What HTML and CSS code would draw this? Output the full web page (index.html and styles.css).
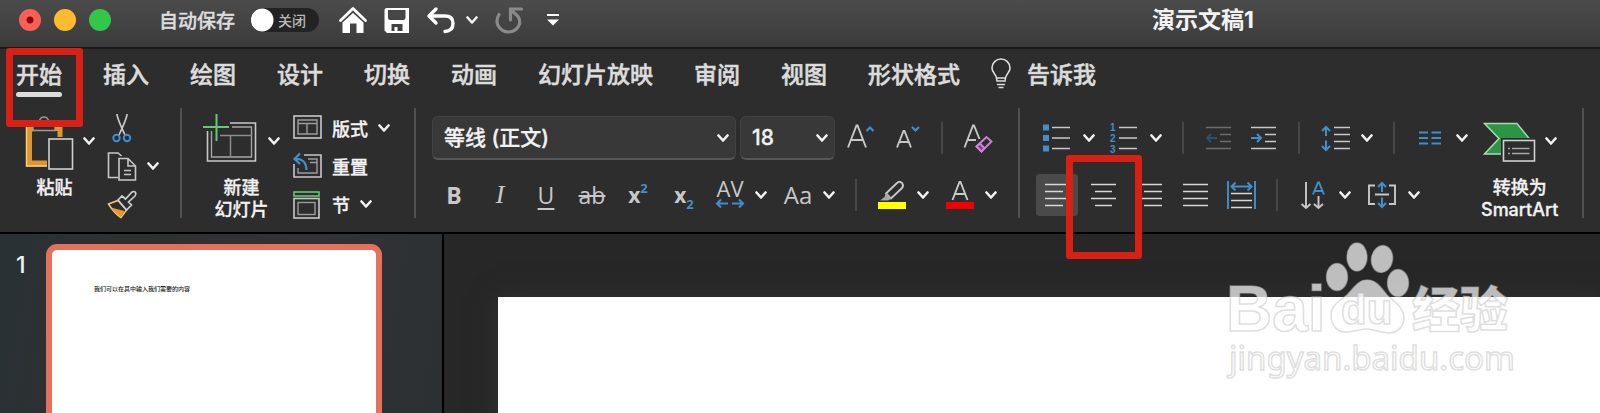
FILE: index.html
```html
<!DOCTYPE html>
<html lang="zh-CN">
<head>
  <meta charset="UTF-8" />
  <meta name="viewport" content="width=device-width, initial-scale=1.0" />
  <title>演示文稿1</title>
  <link rel="stylesheet" href="styles.css">
</head>
<body>
  <svg class="defs" width="0" height="0" aria-hidden="true">
    <symbol id="chev" viewBox="0 0 12 12">
      <path d="M1.5 3.5 L6 8.5 L10.5 3.5" fill="none" stroke="#f2f2f2" stroke-width="2.6" stroke-linecap="round" stroke-linejoin="round" />
    </symbol>
  </svg>

  <header class="titlebar">
    <div class="lights">
      <button class="light close" aria-label="关闭窗口"></button>
      <button class="light minimize" aria-label="最小化"></button>
      <button class="light zoom" aria-label="缩放"></button>
    </div>
    <label class="autosave">
      自动保存
      <span class="switch">
        <input type="checkbox">
        <span class="switch-text">关闭</span>
      </span>
    </label>
    <div class="quick">
      <button aria-label="主页">
        <svg width="28" height="28" viewBox="0 0 28 28">
          <path d="M1.5 14.5 L14 2.5 L26.5 14.5" fill="none" stroke="#fff" stroke-width="2.8" stroke-linecap="round" stroke-linejoin="round" />
          <path d="M3.5 16.5 L14 7 L24.5 16.5 V27 H17.5 V17.5 H11 V27 H3.5 Z" fill="#fff" />
        </svg>
      </button>
      <button aria-label="保存">
        <svg width="26" height="28" viewBox="0 0 26 28">
          <path fill-rule="evenodd" d="M2 2 H25 V27 H3 L0.5 24.5 V3.5 Z M4 4 V11.5 Q4 14 6.5 14 H19 Q21.5 14 21.5 11.5 V4 Z M7.5 18 H18.5 V25 H13.5 V21 H10.5 V25 H7.5 Z" fill="#fff" />
        </svg>
      </button>
      <div class="undo">
        <button aria-label="撤消">
          <svg width="28" height="28" viewBox="0 0 28 28">
            <path d="M9 3 L2 10 L9 17 M2.5 10 H18 Q26 10 26 17.5 Q26 25 18 25.5" fill="none" stroke="#fff" stroke-width="3.4" stroke-linecap="round" stroke-linejoin="round" />
          </svg>
        </button>
        <button aria-label="撤消选项"><svg width="12" height="12"><use href="#chev" /></svg></button>
      </div>
      <button aria-label="重复">
        <svg width="28" height="28" viewBox="0 0 28 28">
          <path d="M4 8.5 Q0.5 14 3 19.5 Q6.500 26 14 26 Q22 25.500 24.500 18 Q25.500 12 21 8.500 L16.500 4.500 M15.500 14 V3 H26.500" fill="none" stroke="#8a8a8a" stroke-width="3.2" stroke-linecap="round" />
        </svg>
      </button>
      <button class="customize" aria-label="自定义快速访问工具栏">
        <svg width="14" height="14" viewBox="0 0 14 14">
          <path d="M1 2 H13" stroke="#fff" stroke-width="2" />
          <path d="M1 6.5 H13 L7 12.500 Z" fill="#fff" />
        </svg>
      </button>
    </div>
    <h1 class="doc-title">演示文稿1</h1>
  </header>

  <nav class="tabs">
    <button class="tab active">开始<span class="mark mark-tab"></span></button>
    <button class="tab">插入</button>
    <button class="tab">绘图</button>
    <button class="tab">设计</button>
    <button class="tab">切换</button>
    <button class="tab">动画</button>
    <button class="tab">幻灯片放映</button>
    <button class="tab">审阅</button>
    <button class="tab">视图</button>
    <button class="tab">形状格式</button>
    <button class="tab tell-me">
      <svg width="20" height="32" viewBox="0 0 20 32" fill="none" stroke="#dcdcdc" stroke-width="1.6">
        <path d="M6 23 Q6 18.5 3 15 Q1 12.5 1 10 A9 9 0 0 1 19 10 Q19 12.5 17 15 Q14 18.5 14 23 Z M6 20 H14 M6 26.5 H14 M7.5 29.5 H12.5" />
      </svg>
      告诉我
    </button>
  </nav>

  <div class="ribbon">
    <!-- 剪贴板 -->
    <section class="group clipboard">
      <button class="big">
        <span class="big-icon">
          <svg width="61" height="58" viewBox="0 0 61 58">
            <path d="M19 16.5 H15 V51.5 H33" fill="none" stroke="#e0962f" stroke-width="6" />
            <path d="M12.5 14 V54 H33" fill="none" stroke="#f6cf86" stroke-width="1.5" />
            <path d="M41 16.5 H46 V25" fill="none" stroke="#e0962f" stroke-width="5" />
            <path d="M19 10 V18.5 H41 V10 H35 Q34 5 30 5 Q26 5 25 10 Z" fill="#2d2d2d" stroke="#9b9b9b" stroke-width="1.5" />
            <rect x="35" y="27" width="23.5" height="30" fill="#2d2d2d" stroke="#d0d0d0" stroke-width="1.6" />
          </svg>
          <svg width="12" height="12"><use href="#chev" /></svg>
        </span>
        <span class="big-label">粘贴</span>
      </button>
      <div class="stack">
        <button class="tool" aria-label="剪切">
          <svg width="30" height="30" viewBox="0 0 30 30" fill="none" stroke-width="1.7">
            <path d="M10 1 Q10 5 18 22 M20 1 Q20 5 12 22" stroke="#c8c8c8" />
            <circle cx="9.5" cy="25" r="3.2" stroke="#3f90cc" stroke-width="2" />
            <circle cx="20" cy="25" r="3.2" stroke="#3f90cc" stroke-width="2" />
          </svg>
        </button>
        <button class="menu" aria-label="复制">
          <svg width="30" height="30" viewBox="0 0 30 30" fill="none" stroke="#c8c8c8" stroke-width="1.6">
            <path d="M11 26.5 H1.5 V2 H11 L14.5 5" />
            <path d="M12 7.5 H21 L28.5 15 V29 H12 Z M21 7.5 V15 H28.5 M17 19.5 H24 M17 23.5 H24" />
          </svg>
          <svg width="12" height="12"><use href="#chev" /></svg>
        </button>
        <button class="tool" aria-label="格式刷">
          <svg width="30" height="30" viewBox="0 0 30 30">
            <path d="M1.5 15 L11 11.5 L19.5 21 L14 28.5 Q7 24 1.5 15 Z" fill="#2d2d2d" stroke="#f2c67e" stroke-width="1.5" />
            <path d="M4 18.5 L17.5 22 L14 28 Q8 24.5 4 18.5 Z" fill="#e9982f" />
            <path d="M11 11 L15 7 L18.5 10 L24.5 3.5 Q27 1.5 28.5 3.5 Q29.5 5.5 28 7 L21.5 13 L24.5 16 L19.5 21 Z" fill="#2d2d2d" stroke="#d0d0d0" stroke-width="1.7" />
          </svg>
        </button>
      </div>
    </section>

    <!-- 幻灯片 -->
    <section class="group slides">
      <button class="big">
        <span class="big-icon">
          <svg width="57" height="58" viewBox="0 0 57 58" fill="none">
            <path d="M27 11 H52.5 V49 H4.5 V19" stroke="#c8c8c8" stroke-width="1.6" />
            <path d="M29 15 H48.5 V45 H8.5 V19" stroke="#a8a8a8" stroke-width="1.3" />
            <path d="M17 23.5 H48.5 M27.5 23.5 V45" stroke="#8c8c8c" stroke-width="1.5" />
            <path d="M0 15 H26 M13.5 2 V29" stroke="#63c977" stroke-width="2" />
          </svg>
          <svg width="12" height="12"><use href="#chev" /></svg>
        </span>
        <span class="big-label">新建<br>幻灯片</span>
      </button>
      <div class="stack">
        <button class="menu">
          <svg width="30" height="30" viewBox="0 0 30 30" fill="none">
            <rect x="2" y="3" width="27" height="22" stroke="#c8c8c8" stroke-width="1.6" />
            <path d="M6 7 H25 V21 H6 Z M6 10.5 H25 M15 10.5 V21" stroke="#9c9c9c" stroke-width="1.4" />
          </svg>
          版式
          <svg width="12" height="12"><use href="#chev" /></svg>
        </button>
        <button class="menu">
          <svg width="30" height="30" viewBox="0 0 30 30" fill="none">
            <path d="M12 4 H29 V26 H2 V13" stroke="#c8c8c8" stroke-width="1.6" />
            <path d="M16 8 H25 V22 H6 V17 M18 11.5 H25" stroke="#9c9c9c" stroke-width="1.4" />
            <path d="M8 2.5 L2.5 8 L8 13 M3 8 Q14 7 14.5 19" stroke="#3f90cc" stroke-width="2.2" />
          </svg>
          重置
        </button>
        <button class="menu">
          <svg width="30" height="30" viewBox="0 0 30 30" fill="none">
            <rect x="2" y="3" width="25" height="4" stroke="#63c977" stroke-width="1.6" />
            <rect x="2" y="9.5" width="25" height="19.5" stroke="#c8c8c8" stroke-width="1.6" />
            <rect x="6" y="13.5" width="17" height="12" stroke="#9c9c9c" stroke-width="1.4" />
          </svg>
          节
          <svg width="12" height="12"><use href="#chev" /></svg>
        </button>
      </div>
    </section>

    <!-- 字体 -->
    <section class="group font">
      <div class="line">
        <div class="combos">
          <div class="combo combo-font">
            <select aria-label="字体"><option>等线 (正文)</option></select>
            <svg width="12" height="12"><use href="#chev" /></svg>
          </div>
          <div class="combo combo-size">
            <select aria-label="字号"><option>18</option></select>
            <svg width="12" height="12"><use href="#chev" /></svg>
          </div>
        </div>
        <div class="row">
          <button class="tool" aria-label="增大字号">
            <svg width="30" height="30" viewBox="0 0 30 30" fill="none" stroke="#c8c8c8" stroke-width="1.9">
              <path d="M3 24.5 L11.5 2.5 H12.5 L21 24.5 M6 17 H18" />
              <path d="M21.5 8 L25 4.5 L28.5 8" stroke="#3f90cc" stroke-width="2.2" />
            </svg>
          </button>
          <button class="tool" aria-label="减小字号">
            <svg width="30" height="30" viewBox="0 0 30 30" fill="none" stroke="#c8c8c8" stroke-width="1.9">
              <path d="M6 24.5 L12.5 8 H13.5 L20 24.5 M8.5 19 H17.5" />
              <path d="M21 4 L24.5 7.5 L28 4" stroke="#3f90cc" stroke-width="2.2" />
            </svg>
          </button>
          <span class="sep"></span>
          <button class="tool" aria-label="清除格式">
            <svg width="30" height="30" viewBox="0 0 30 30" fill="none" stroke="#c8c8c8" stroke-width="1.9">
              <path d="M1.5 24.5 L10 2.5 H11 L16.5 16 M4.5 17 H13" />
              <path d="M13.5 23.5 L23.5 14 L28.5 18.5 L18.5 28.5 Z" fill="#2d2d2d" stroke="#cf83d8" />
              <path d="M13.5 23.5 L17 20.5 L21.5 25 L18.5 28.5 Z" fill="#8b3b97" stroke="#cf83d8" />
            </svg>
          </button>
        </div>
      </div>
      <div class="row text-row">
        <button class="tool letter bold">B</button>
        <button class="tool letter italic">I</button>
        <button class="tool letter underline">U</button>
        <button class="tool letter strike">ab</button>
        <button class="tool letter script">x<sup>2</sup></button>
        <button class="tool letter script">x<sub>2</sub></button>
        <button class="menu" aria-label="字符间距">
          <svg width="30" height="30" viewBox="0 0 30 30">
            <text class="glyph" x="15" y="17" font-size="22">AV</text>
            <path d="M13 23.5 H2 M6 19.5 L2 23.5 L6 27.5 M17 23.5 H28 M24 19.5 L28 23.5 L24 27.5" fill="none" stroke="#3f90cc" stroke-width="2" />
          </svg>
          <svg width="12" height="12"><use href="#chev" /></svg>
        </button>
        <button class="menu" aria-label="更改大小写">
          <svg width="30" height="30" viewBox="0 0 30 30">
            <text class="glyph" x="15" y="24" font-size="24">Aa</text>
          </svg>
          <svg width="12" height="12"><use href="#chev" /></svg>
        </button>
        <span class="sep"></span>
        <button class="menu" aria-label="突出显示颜色">
          <svg width="30" height="30" viewBox="0 0 30 30">
            <path d="M9 13.5 L20 3 Q22.5 0.5 25 3 Q27 5.5 25 8 L14 18.5 Z" fill="none" stroke="#c8c8c8" stroke-width="1.9" />
            <path d="M9 13 L14.5 18.5 L11 20.5 H3 L7.5 17 Z" fill="#a8a8a8" />
            <rect x="1" y="22" width="28" height="7" fill="#ffff00" />
          </svg>
          <svg width="12" height="12"><use href="#chev" /></svg>
        </button>
        <button class="menu" aria-label="字体颜色">
          <svg width="30" height="30" viewBox="0 0 30 30">
            <path d="M7.5 20 L14.5 2 H15.5 L22.5 20 M10 14 H20" fill="none" stroke="#c8c8c8" stroke-width="1.9" />
            <rect x="1" y="22" width="28" height="7" fill="#f20000" />
          </svg>
          <svg width="12" height="12"><use href="#chev" /></svg>
        </button>
      </div>
    </section>

    <!-- 段落 -->
    <section class="group paragraph">
      <div class="line">
        <div class="row list-row">
          <button class="menu" aria-label="项目符号">
            <svg width="30" height="30" viewBox="0 0 30 30">
              <path d="M1 1.5 h6 v6 h-6 Z M1 12 h6 v6 h-6 Z M1 22.5 h6 v6 h-6 Z" fill="#3f90cc" />
              <path d="M10 4.5 H28 M10 15 H28 M10 25.5 H28" stroke="#c8c8c8" stroke-width="1.7" />
            </svg>
            <svg width="12" height="12"><use href="#chev" /></svg>
          </button>
          <button class="menu" aria-label="编号">
            <svg width="30" height="30" viewBox="0 0 30 30">
              <g class="nums">
                <text x="1" y="8">1</text>
                <text x="1" y="19">2</text>
                <text x="1" y="30">3</text>
              </g>
              <path d="M10 4.5 H28 M10 15 H28 M10 25.5 H28" stroke="#c8c8c8" stroke-width="1.7" />
            </svg>
            <svg width="12" height="12"><use href="#chev" /></svg>
          </button>
          <span class="sep"></span>
          <button class="tool" aria-label="减少缩进量" disabled>
            <svg width="30" height="30" viewBox="0 0 30 30" fill="none" stroke="#6c6c6c" stroke-width="1.7">
              <path d="M2 4.5 H27 M16 11.5 H27 M16 18.5 H27 M2 25.5 H27" />
              <path d="M13 15 H3 M7 11 L3 15 L7 19" stroke="#2c516d" stroke-width="2" />
            </svg>
          </button>
          <button class="tool" aria-label="增加缩进量">
            <svg width="30" height="30" viewBox="0 0 30 30" fill="none" stroke="#c8c8c8" stroke-width="1.7">
              <path d="M3 4.5 H28 M17 11.5 H28 M17 18.5 H28 M3 25.5 H28" />
              <path d="M3 15 H13 M9 11 L13 15 L9 19" stroke="#3f90cc" stroke-width="2" />
            </svg>
          </button>
          <span class="sep"></span>
          <button class="menu" aria-label="行距">
            <svg width="30" height="30" viewBox="0 0 30 30" fill="none" stroke="#c8c8c8" stroke-width="1.7">
              <path d="M14 4.5 H30 M14 11.5 H30 M14 18.5 H30 M14 25.5 H30" />
              <path d="M6 13 V4 M2 8 L6 4 L10 8 M6 17.5 V27 M2 23 L6 27 L10 23" stroke="#3f90cc" stroke-width="2" />
            </svg>
            <svg width="12" height="12"><use href="#chev" /></svg>
          </button>
          <span class="sep"></span>
          <button class="menu" aria-label="分栏">
            <svg width="30" height="30" viewBox="0 0 30 30">
              <path d="M4 9.5 H13 M16.5 9.5 H26 M4 15 H13 M16.5 15 H26 M4 20.5 H13 M16.5 20.5 H26" stroke="#3f90cc" stroke-width="1.8" />
            </svg>
            <svg width="12" height="12"><use href="#chev" /></svg>
          </button>
        </div>
      </div>
      <div class="row">
        <button class="tool selected" aria-label="左对齐">
          <svg width="30" height="30" viewBox="0 0 30 30"><path d="M3 4.5 H28 M3 11.5 H21 M3 18.5 H28 M3 25.5 H21" stroke="#d8d8d8" stroke-width="1.7" /></svg>
        </button>
        <button class="tool" aria-label="居中">
          <svg width="30" height="30" viewBox="0 0 30 30"><path d="M3 4.5 H28 M7 11.5 H24 M3 18.5 H28 M7 25.5 H24" stroke="#d8d8d8" stroke-width="1.7" /></svg>
          <span class="mark mark-center"></span>
        </button>
        <button class="tool" aria-label="右对齐">
          <svg width="30" height="30" viewBox="0 0 30 30"><path d="M3 4.5 H28 M10 11.5 H28 M3 18.5 H28 M10 25.5 H28" stroke="#d8d8d8" stroke-width="1.7" /></svg>
        </button>
        <button class="tool" aria-label="两端对齐">
          <svg width="30" height="30" viewBox="0 0 30 30"><path d="M3 4.5 H28 M3 11.5 H28 M3 18.5 H28 M3 25.5 H28" stroke="#d8d8d8" stroke-width="1.7" /></svg>
        </button>
        <button class="tool" aria-label="分散对齐">
          <svg width="30" height="30" viewBox="0 0 30 30" fill="none">
            <path d="M5 13.5 H26 M5 20.5 H26 M5 27.5 H26" stroke="#d8d8d8" stroke-width="1.7" />
            <path d="M2 1 V29 M29 1 V29 M6 6.5 H25 M9.5 2.5 L5.5 6.5 L9.5 10.5 M21.5 2.5 L25.5 6.5 L21.5 10.5" stroke="#3f90cc" stroke-width="1.9" />
          </svg>
        </button>
        <span class="sep"></span>
        <button class="menu" aria-label="文字方向">
          <svg width="30" height="30" viewBox="0 0 30 30" fill="none" stroke="#c8c8c8" stroke-width="1.9">
            <path d="M8 2 V28 M3.5 24 L8 28 L12.5 24 M20.5 16 V28 M16 24 L20.5 28 L25 24" />
            <path d="M15 14.5 L20 2.5 H21 L26 14.5 M16.5 11 H24.5" stroke="#3f90cc" />
          </svg>
          <svg width="12" height="12"><use href="#chev" /></svg>
        </button>
        <button class="menu" aria-label="对齐文本">
          <svg width="30" height="30" viewBox="0 0 30 30" fill="none" stroke="#c8c8c8" stroke-width="1.9">
            <path d="M8 5.5 H2 V24 H8 M22 5.5 H28 V24 H22 M8 14.5 H22" />
            <path d="M15 12 V3 M11 7 L15 3 L19 7 M15 17.5 V27 M11 23 L15 27 L19 23" stroke="#3f90cc" stroke-width="2" />
          </svg>
          <svg width="12" height="12"><use href="#chev" /></svg>
        </button>
      </div>
    </section>

    <section class="group smartart">
      <button class="big">
        <span class="big-icon">
          <svg width="54" height="58" viewBox="0 0 54 58">
            <path d="M1.5 11.5 H34 L49 30 L36 42 H1.5 L16 26.5 Z" fill="#2b9445" stroke="#a9dcb4" stroke-width="1.5" />
            <rect x="18" y="26" width="36" height="25" fill="#2d2d2d" />
            <rect x="20.5" y="28.5" width="31" height="20.5" fill="#2d2d2d" stroke="#d0d0d0" stroke-width="1.6" />
            <path d="M25 36.5 h2 M29 36.5 H46.5 M25 41.5 h2 M29 41.5 H46.5" stroke="#a8a8a8" stroke-width="1.5" />
          </svg>
          <svg width="12" height="12"><use href="#chev" /></svg>
        </span>
        <span class="big-label">转换为<br>SmartArt</span>
      </button>
    </section>
  </div>

  <main class="workspace">
    <aside class="thumbs">
      <span class="thumb-no">1</span>
      <div class="thumb">我们可以在其中输入我们需要的内容</div>
    </aside>
    <div class="editor">
      <div class="slide"></div>
      <svg class="watermark" width="300" height="160" viewBox="0 0 300 160">
        <g class="wm-shape">
          <ellipse cx="117" cy="42" rx="10.5" ry="13.5" />
          <ellipse cx="137" cy="22" rx="10" ry="14" />
          <ellipse cx="162" cy="24" rx="10.5" ry="13.5" transform="rotate(10 162 24)" />
          <ellipse cx="178" cy="48" rx="10.5" ry="13.5" />
          <path d="M147 45 C138 45 134 53 127 60 C118 67 111 71 111 80 C111 92 119 98 128 97 C137 96 141 94 147 94 C154 94 160 98 169 98 C178 98 184 91 184 82 C183 71 174 67 167 60 C161 53 157 45 147 45 Z" />
        </g>
        <text class="wm-bai" x="6" y="96">Bai</text>
        <text class="wm-du" x="121" y="89">du</text>
        <text class="wm-cn" x="192" y="92">经验</text>
        <text class="wm-url" x="9" y="135">jingyan.baidu.com</text>
      </svg>
    </div>
  </main>
</body>
</html>
```

FILE: styles.css
```css
* { box-sizing: border-box; }
body {
  margin: 0;
  height: 100vh;
  overflow: hidden;
  display: flex;
  flex-direction: column;
  background: #2d2d2d;
  color: #f2f2f2;
  font-family: Inter, "Noto Sans CJK SC", sans-serif;
  font-size: 18px;
}
button {
  margin: 0;
  padding: 0;
  border: 0;
  background: none;
  color: inherit;
  font: inherit;
  cursor: pointer;
}
svg { display: block; flex: none; overflow: visible; }
.defs { position: absolute; }

/* title bar */
.titlebar {
  display: flex;
  align-items: center;
  height: 49px;
  padding: 0 20px 8px 19px;
  background: linear-gradient(#4b4b4b, #3b3b3b);
  border-bottom: 2px solid #1a1a1a;
  flex: none;
}
.lights {
  display: flex;
  gap: 13px;
}
.light {
  width: 22px;
  height: 22px;
  border-radius: 50%;
}
.close { background: radial-gradient(circle, #8e0000 3px, #fb5f58 4px); }
.minimize { background: #fdbc30; }
.zoom { background: #33c748; }
.autosave {
  display: flex;
  align-items: center;
  gap: 16px;
  margin-left: 48px;
  font-size: 19px;
  font-weight: 500;
  color: #dcdcdc;
  -webkit-text-stroke: 0.4px;
}
.switch {
  position: relative;
  display: flex;
  align-items: center;
}
.switch input {
  appearance: none;
  margin: 0;
  width: 68px;
  height: 24px;
  border-radius: 12px;
  background: radial-gradient(circle at 11px 12px, #fff 11px, transparent 12px), #232323;
}
.switch-text {
  position: absolute;
  right: 13px;
  font-size: 14px;
  color: #b8b8b8;
  -webkit-text-stroke: 0;
}
.quick {
  display: flex;
  align-items: center;
  gap: 17px;
  margin-left: 20px;
}
.undo {
  display: flex;
  align-items: center;
  gap: 11px;
}
.customize { margin-left: 6px; }
.doc-title {
  flex: 1;
  margin: 0 0 0 266px;
  text-align: center;
  font-size: 23px;
  line-height: 30px;
  font-weight: 700;
}

/* tabs */
.tabs {
  display: flex;
  gap: 41px;
  padding: 9px 16px 11px;
  flex: none;
}
.tab {
  position: relative;
  display: flex;
  flex-direction: column;
  height: 39px;
  line-height: 34px;
  font-size: 23px;
  font-weight: 500;
  color: #dcdcdc;
  white-space: nowrap;
  -webkit-text-stroke: 0.5px;
}
.active::after {
  content: "";
  height: 5px;
  border-radius: 3px;
  background: #dcdcdc;
}
.tell-me {
  flex-direction: row;
  gap: 16px;
  margin-left: -10px;
}

/* red frames */
.mark {
  position: absolute;
  border: 7px solid #d92014;
  border-radius: 3px;
  z-index: 5;
  pointer-events: none;
}
.mark-tab { inset: -10px -21px -30px -10px; }
.mark-center { inset: -25px -24px -49px -22px; }

/* ribbon */
.ribbon {
  display: flex;
  height: 126px;
  padding-bottom: 14px;
  border-bottom: 2px solid #000;
  flex: none;
}
.group {
  border-right: 2px solid #515151;
  padding: 0 21px 0 16px;
  flex: none;
}
.clipboard, .slides {
  display: flex;
  gap: 12px;
}
.clipboard { padding-left: 14px; }
.slides { padding: 0 24px 0 21px; }
.big {
  display: flex;
  flex-direction: column;
  align-items: center;
  gap: 7px;
  padding-top: 4px;
}
.big-icon {
  display: flex;
  align-items: center;
  gap: 8px;
}
.big-label {
  line-height: 22px;
  font-weight: 500;
  -webkit-text-stroke: 0.3px;
}
.stack {
  display: flex;
  flex-direction: column;
  align-items: flex-start;
  gap: 8px;
  padding-top: 5px;
}
.tool {
  position: relative;
  width: 30px;
  height: 30px;
}
.menu {
  display: flex;
  align-items: center;
  gap: 11px;
  height: 30px;
  font-weight: 500;
  -webkit-text-stroke: 0.3px;
}
.stack .menu { gap: 10px; }
.line {
  display: flex;
  align-items: center;
  gap: 10px;
  height: 44px;
  margin: 8px 0 19px;
}
.row {
  display: flex;
  align-items: center;
  gap: 16px;
}
.sep {
  width: 2px;
  height: 32px;
  margin: 0 4px;
  background: #474747;
}
.text-row { padding-left: 7px; }
.text-row .menu { gap: 10px; }
.paragraph { border-right: 0; padding-right: 13px; }
.paragraph .row { padding-left: 6px; }
.list-row { gap: 14px; }
.list-row .sep { margin: 0 6px; }
.smartart { padding: 0 24px 0 0; }
.selected {
  background: #4a4a4a;
  border-radius: 1px;
  box-shadow: 0 0 0 6px #4a4a4a;
}
.combos {
  display: flex;
  gap: 4px;
}
.combo { position: relative; }
.combo-font { width: 304px; }
.combo-size { width: 95px; }
.combo select {
  appearance: none;
  width: 100%;
  height: 44px;
  padding: 0 11px;
  border: 1px solid #424242;
  border-bottom: 2px solid #575757;
  border-radius: 6px;
  background: #383838;
  color: #f2f2f2;
  font: 500 21px Inter, "Noto Sans CJK SC", sans-serif;
  -webkit-text-stroke: 0.3px;
}
.combo svg {
  position: absolute;
  right: 7px;
  top: 16px;
  pointer-events: none;
}

.letter {
  line-height: 30px;
  font-family: "Open Sans", sans-serif;
  font-size: 23px;
  color: #c8c8c8;
}
.bold { font-weight: 700; }
.italic {
  font-family: "Liberation Serif", serif;
  font-style: italic;
  font-size: 26px;
}
.underline { text-decoration: underline; text-underline-offset: 4px; }
.strike { text-decoration: line-through; }
.script { font-weight: 700; font-size: 21px; }
.script sup, .script sub {
  font-size: 13px;
  line-height: 0;
  color: #3f90cc;
}
.script sup { vertical-align: 10px; }
.script sub { vertical-align: -6px; }
.glyph {
  font-family: "Open Sans", sans-serif;
  fill: #c8c8c8;
  text-anchor: middle;
}
.nums text {
  font: 700 10px "Liberation Sans", sans-serif;
  fill: #3f90cc;
}

/* slides */
.workspace {
  display: flex;
  flex: 1;
  min-height: 0;
}
.thumbs {
  display: flex;
  align-items: flex-start;
  width: 444px;
  padding: 10px 0 0 16px;
  border-right: 2px solid #000;
  background: linear-gradient(100deg, #293135 0%, #2f3030 30%, #333336 65%, #2b3033 100%);
  overflow: hidden;
  flex: none;
}
.thumb-no {
  width: 30px;
  line-height: 42px;
  font-size: 23px;
  font-weight: 500;
}
.thumb {
  width: 336px;
  aspect-ratio: 16 / 9;
  padding: 34px 42px;
  border: 6px solid #e5705b;
  border-radius: 11px;
  background: #fff;
  color: #222;
  font-size: 6px;
  font-weight: 500;
}
.editor {
  position: relative;
  flex: 1;
  padding: 63px 0 0 54px;
  background: #272727;
  overflow: hidden;
}
.slide {
  aspect-ratio: 16 / 9;
  background: #fff;
  box-shadow: 0 0 24px #333;
}
.watermark {
  position: absolute;
  top: 1px;
  right: 80px;
}
.wm-shape, .watermark text {
  fill: rgba(255, 255, 255, 0.7);
  stroke: rgba(190, 190, 190, 0.5);
  stroke-width: 1.5px;
}
.wm-bai { font: 700 64px "Liberation Sans", sans-serif; }
.wm-du { font: 700 42px "Liberation Sans", sans-serif; }
.wm-cn { font: 900 48px "Noto Sans CJK SC", sans-serif; }
.wm-url { font: 400 33px "Noto Sans", sans-serif; }
```
